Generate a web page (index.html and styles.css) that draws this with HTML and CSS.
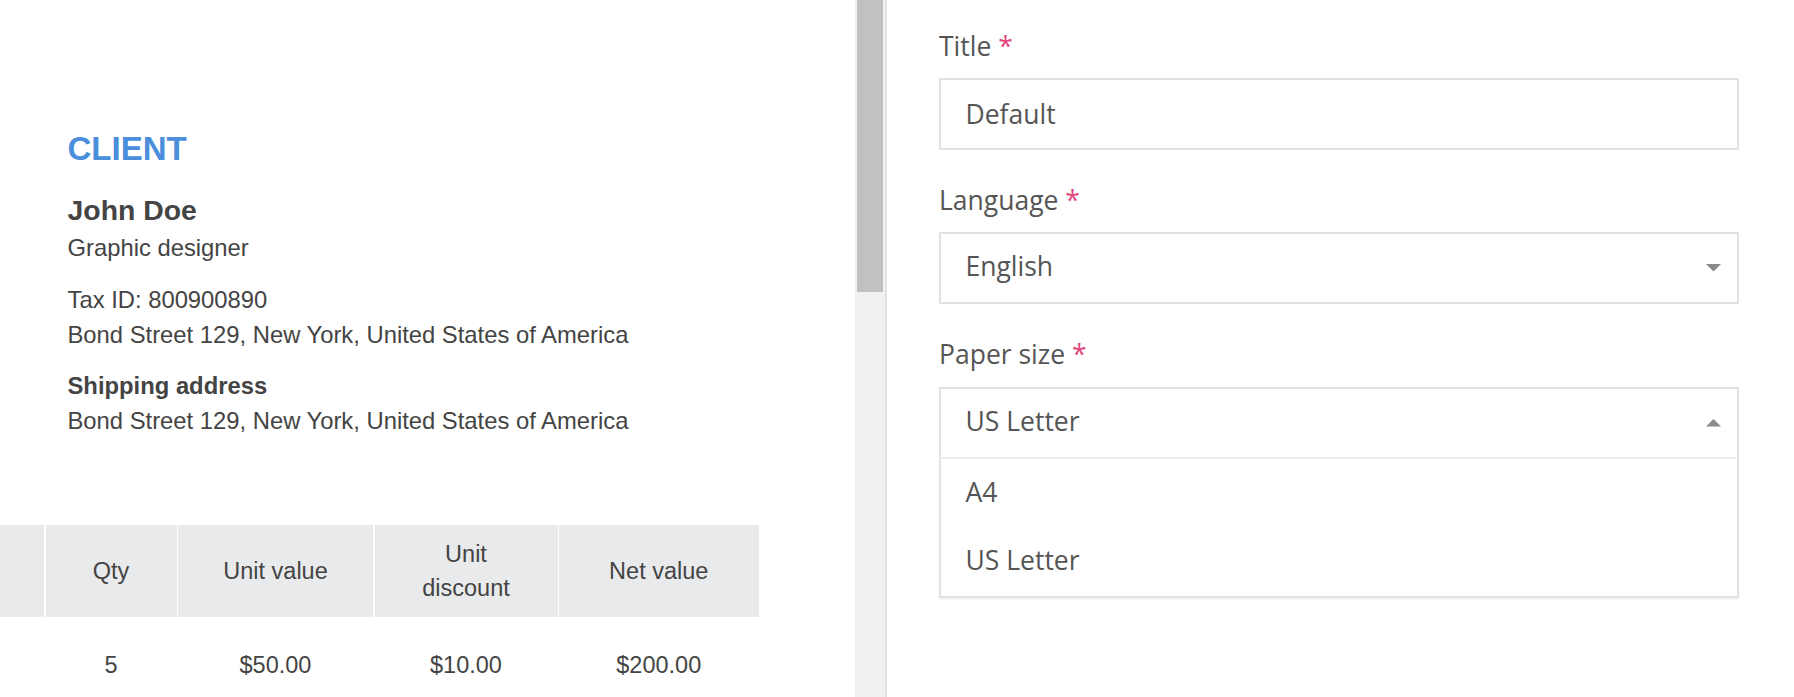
FILE: index.html
```html
<!DOCTYPE html>
<html lang="en">
<head>
<meta charset="utf-8">
<title>Invoice settings</title>
<link rel="stylesheet" href="styles.css">
</head>
<body>
  <div class="preview">
    <div class="client">
      <h2 class="client-heading">CLIENT</h2>
      <p class="client-name">John Doe</p>
      <p class="client-line">Graphic designer</p>
      <p class="client-line client-tax">Tax ID: 800900890</p>
      <p class="client-line">Bond Street 129, New York, United States of America</p>
      <p class="client-line client-ship">Shipping address</p>
      <p class="client-line">Bond Street 129, New York, United States of America</p>
    </div>
    <div class="items">
      <div class="items-row items-head">
        <div class="cell"></div>
        <div class="cell">Qty</div>
        <div class="cell">Unit value</div>
        <div class="cell">Unit<br>discount</div>
        <div class="cell">Net value</div>
      </div>
      <div class="items-row items-body">
        <div class="cell"></div>
        <div class="cell">5</div>
        <div class="cell">$50.00</div>
        <div class="cell">$10.00</div>
        <div class="cell">$200.00</div>
      </div>
    </div>
  </div>
  <div class="scrollbar"><div class="thumb"></div></div>
  <div class="form">
    <div class="field">
      <div class="label">Title <span class="req">*</span></div>
      <div class="control">Default</div>
    </div>
    <div class="field">
      <div class="label">Language <span class="req">*</span></div>
      <div class="control select">
        <span>English</span>
        <svg class="caret" width="15" height="8" viewBox="0 0 15 8"><polygon points="0,0 15,0 7.5,7.5" fill="#8a8a8a"/></svg>
      </div>
    </div>
    <div class="field">
      <div class="label">Paper size <span class="req">*</span></div>
      <div class="control select open">
        <span>US Letter</span>
        <svg class="caret" width="15" height="8" viewBox="0 0 15 8"><polygon points="0,7.5 15,7.5 7.5,0" fill="#8a8a8a"/></svg>
      </div>
      <div class="options">
        <div class="option">A4</div>
        <div class="option">US Letter</div>
      </div>
    </div>
  </div>
</body>
</html>
```
FILE: styles.css
```css
* { box-sizing: border-box; }
html, body { margin: 0; padding: 0; }
body {
  display: flex;
  height: 697px;
  overflow: hidden;
  background: #fff;
  font-family: "Liberation Sans", Arial, sans-serif;
  color: #444;
}
.preview {
  width: 855px;
  flex: none;
  overflow: hidden;
  padding-top: 128.9px;
  background: #fff;
}
.client {
  padding-left: 67.5px;
  font-size: 23.8px;
  line-height: 35px;
}
.client-heading {
  margin: 0;
  font-size: 33px;
  line-height: 40px;
  font-weight: bold;
  color: #4a8edc;
}
.client-name {
  margin: 23px 0 0;
  font-size: 28.4px;
  line-height: 36px;
  font-weight: bold;
}
.client-line { margin: 0; }
.client-name + .client-line { margin-top: 2px; }
.client-tax { margin-top: 17px; }
.client-ship { margin-top: 16px; font-weight: bold; }
.items {
  margin-top: 86.8px;
  font-size: 23.5px;
  line-height: 34px;
}
.items-row {
  display: grid;
  grid-template-columns: 44px 131px 195px 183px 199.5px;
  column-gap: 1.5px;
  width: 758.5px;
}
.items-head .cell {
  background: #e9eaec;
  height: 92px;
  display: flex;
  align-items: center;
  justify-content: center;
  text-align: center;
}
.items-body .cell {
  text-align: center;
  padding-top: 31.5px;
}
.scrollbar {
  width: 30px;
  flex: none;
  background: #f1f1f1;
  padding: 0 2px;
}
.thumb {
  height: 292px;
  background: #c1c1c1;
}
.form {
  flex: 1;
  border-left: 2px solid #e2e2e2;
  padding: 26.5px 55px 0 52px;
  font-family: "Open Sans", "Noto Sans", sans-serif;
  font-size: 26.5px;
  color: #555;
}
.field + .field { margin-top: 31.2px; }
.label {
  line-height: 38px;
  margin-bottom: 13.3px;
}
.req { color: #e2457c; }
.control {
  height: 72px;
  border: 2px solid #e2e2e2;
  padding: 0 16px 0 24.5px;
  line-height: 68px;
  display: flex;
  align-items: center;
  justify-content: space-between;
}
.select span { line-height: 64px; padding-bottom: 4px; }
.control.open { border-bottom-color: #eeeeee; }
.caret { display: block; }
.options {
  border: 2px solid #e2e2e2;
  border-top: none;
  box-shadow: 0 2px 2px rgba(0, 0, 0, 0.05);
}
.option {
  line-height: 66px;
  height: 68.5px;
  padding: 0 24.5px;
}
```
